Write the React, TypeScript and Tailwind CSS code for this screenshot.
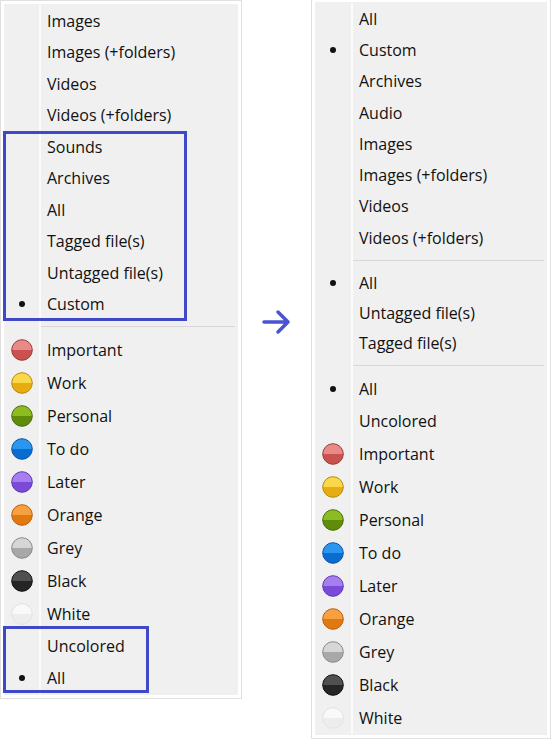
import React from "react";

type Item = { t?: string; h: number; dot?: boolean; c?: string; sep?: boolean };

const C: Record<string, [string, string, string]> = {
  red: ["#e88a87", "#c9524f", "#9e3b39"],
  yellow: ["#fbd84a", "#e6ac10", "#b88a0c"],
  green: ["#8cbc20", "#5f8c0a", "#4a6e08"],
  blue: ["#2a96f0", "#0a6cd0", "#0a56a8"],
  purple: ["#a67ef0", "#7a4ad8", "#6038b0"],
  orange: ["#f8a040", "#e07a10", "#b86010"],
  grey: ["#d6d6d6", "#a8a8a8", "#8a8a8a"],
  black: ["#505050", "#252525", "#111"],
  white: ["#fafafa", "#ededed", "#e2e2e2"],
};

function Ball({ c }: { c: string }) {
  const [a, b, s] = C[c];
  const id = "g" + c;
  return (
    <svg width="22" height="22" viewBox="0 0 22 22">
      <defs>
        <linearGradient id={id} x1="0" y1="0" x2="0" y2="1">
          <stop offset="0" stopColor={a} />
          <stop offset="0.5" stopColor={a} />
          <stop offset="0.5" stopColor={b} />
          <stop offset="1" stopColor={b} />
        </linearGradient>
      </defs>
      <circle cx="11" cy="11" r="10.3" fill={`url(#${id})`} stroke={s} strokeWidth="1" opacity={c === "white" ? 0.9 : 1} />
    </svg>
  );
}

function Menu({ items, gutter }: { items: Item[]; gutter: number }) {
  return (
    <div className="border border-[#e0e0e0] bg-white p-[3px]">
      <div className="bg-[#f0f0f0] flex flex-col py-[1px]">
        {items.map((it, i) =>
          it.sep ? (
            <div key={i} className="flex" style={{ height: it.h }}>
              <div className="shrink-0" style={{ width: gutter }} />
              <div className="w-[2px] bg-[#fbfbfb]" />
              <div className="flex-1 flex items-center pr-[3px]">
                <div className="h-[1px] w-full bg-[#d7d7d7]" />
              </div>
            </div>
          ) : (
            <div key={i} className="flex" style={{ height: it.h }}>
              <div className="shrink-0 flex items-center justify-center" style={{ width: gutter }}>
                {it.dot && <div className="w-[6px] h-[6px] rounded-full bg-[#111]" />}
                {it.c && <Ball c={it.c} />}
              </div>
              <div className="w-[2px] bg-[#fbfbfb]" />
              <div className="flex-1 flex items-center pl-[6px] text-[16px] text-[#111]">{it.t}</div>
            </div>
          )
        )}
      </div>
    </div>
  );
}

const L = 31.5;
const left: Item[] = [
  ...["Images", "Images (+folders)", "Videos", "Videos (+folders)", "Sounds", "Archives", "All", "Tagged file(s)", "Untagged file(s)"].map((t) => ({ t, h: L })),
  { t: "Custom", h: L, dot: true },
  { sep: true, h: 13.5 },
  ...[
    ["Important", "red"], ["Work", "yellow"], ["Personal", "green"], ["To do", "blue"], ["Later", "purple"],
    ["Orange", "orange"], ["Grey", "grey"], ["Black", "black"], ["White", "white"],
  ].map(([t, c]) => ({ t, c, h: 33 })),
  { t: "Uncolored", h: L },
  { t: "All", h: L, dot: true },
];

const right: Item[] = [
  { t: "All", h: 31.3 },
  { t: "Custom", h: 31.3, dot: true },
  ...["Archives", "Audio", "Images", "Images (+folders)", "Videos", "Videos (+folders)"].map((t) => ({ t, h: 31.3 })),
  { sep: true, h: 15 },
  { t: "All", h: 30, dot: true },
  { t: "Untagged file(s)", h: 30 },
  { t: "Tagged file(s)", h: 30 },
  { sep: true, h: 15 },
  { t: "All", h: 32, dot: true },
  { t: "Uncolored", h: 32 },
  ...[
    ["Important", "red"], ["Work", "yellow"], ["Personal", "green"], ["To do", "blue"], ["Later", "purple"],
    ["Orange", "orange"], ["Grey", "grey"], ["Black", "black"], ["White", "white"],
  ].map(([t, c]) => ({ t, c, h: 33 })),
];

export default function App() {
  return (
    <div className="relative w-[551px] h-[739px] bg-white overflow-hidden" style={{ fontFamily: '"Open Sans", "Noto Sans", sans-serif' }}>
      <div className="flex items-start">
        <div className="w-[242px] mt-0">
          <Menu items={left} gutter={35} />
        </div>
        <div className="w-[69px] flex justify-center pt-[307px]">
          <svg width="32" height="30" viewBox="0 0 32 30">
            <path d="M3 15 H27 M17 5 L27 15 L17 25" fill="none" stroke="#4a54d0" strokeWidth="3.5" strokeLinecap="round" strokeLinejoin="round" />
          </svg>
        </div>
        <div className="w-[240px] -mt-[2px]">
          <Menu items={right} gutter={36} />
        </div>
      </div>
      <div className="absolute left-[3px] top-[131px] w-[184px] h-[190px] border-[3px] border-[#4048c8]" />
      <div className="absolute left-[3px] top-[626px] w-[146px] h-[67px] border-[3px] border-[#4048c8]" />
    </div>
  );
}
